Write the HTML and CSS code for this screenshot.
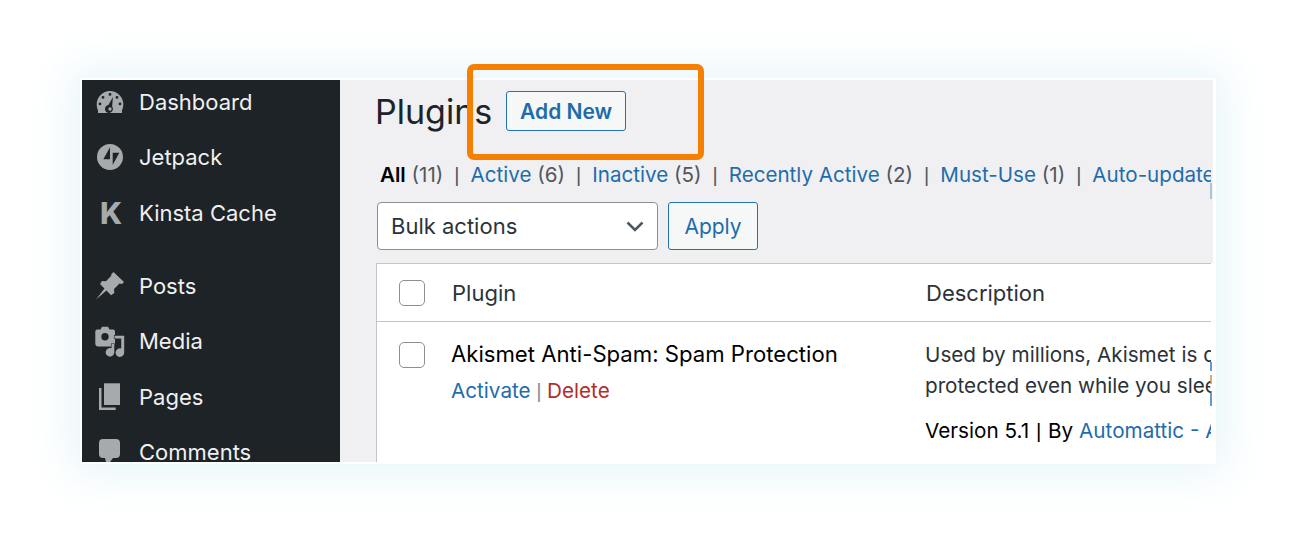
FILE: index.html
```html
<!DOCTYPE html>
<html lang="en">
<head>
    <meta charset="UTF-8">
    <title>Plugins</title>
    <link rel="stylesheet" href="styles.css">
</head>
<body>
    <div class="frame">
        <!-- Sidebar -->
        <div class="sidebar">
            <ul class="menu">
                <li>
                    <svg class="icon" viewBox="0 0 32 32"><path fill-rule="evenodd" d="M15 5a13.300 13.300 0 0 1 13.300 13.300c0 2.200-.4 4.200-1.300 6V27H3v-2.700C2.100 22.500 1.700 20.500 1.700 18.300A13.300 13.300 0 0 1 15 5zM15 7a1.400 1.400 0 1 0 0 2.800 1.400 1.400 0 0 0 0-2.800zM8 10a1.400 1.400 0 1 0 0 2.800A1.400 1.400 0 0 0 8 10zM22 10a1.400 1.400 0 1 0 0 2.800 1.400 1.400 0 0 0 0-2.800zM5 16.500a1.400 1.400 0 1 0 0 2.800 1.400 1.400 0 0 0 0-2.800zM25 16.500a1.400 1.400 0 1 0 0 2.800 1.400 1.400 0 0 0 0-2.800zM18 11l-4.600 8a4 4 0 1 0 3.700 1.500z"/><circle cx="15" cy="23" r="1.700"/></svg>
                    Dashboard
                </li>
                <li>
                    <svg class="icon" viewBox="0 0 32 32"><path fill-rule="evenodd" d="M15 3a13 13 0 1 1 0 26 13 13 0 0 1 0-26zM15 6.300L8.300 18.300H15zM17.700 11.700V24l6.600-12.300z"/></svg>
                    Jetpack
                </li>
                <li class="menu-end">
                    <span class="icon icon-k">K</span>
                    Kinsta Cache
                </li>
                <li>
                    <svg class="icon" viewBox="0 0 32 32"><path d="M18.500 2L29 12l-2 2-2.500-.5L19 19l.3 4-3.300 2.200-4.500-4.700L1 29.500l8.500-11L5 14l2-3 4 .2L16 6l.5-2z"/></svg>
                    Posts
                </li>
                <li>
                    <svg class="icon" viewBox="0 0 32 32"><path fill-rule="evenodd" d="M7 1.700h6l1.500 2.800H18a2 2 0 0 1 2 2v12a3 3 0 0 1-3 3H3.300a3 3 0 0 1-3-3v-12a2 2 0 0 1 2-2h3.200zM10 8a3.700 3.700 0 1 0 0 7.400A3.700 3.700 0 0 0 10 8z"/><path class="note-cut" d="M19.500 10.700h9.700v16.800a4.300 4.300 0 1 1-3-4V13.500h-6.700z"/><path class="note-cut" d="M16.500 19h2.800v8.300a4.300 4.300 0 1 1-2.800-4z"/></svg>
                    Media
                </li>
                <li>
                    <svg class="icon" viewBox="0 0 32 32"><path d="M9 2.300h16V24H9z"/><path d="M4 7h2.500v19.500h14.200V29H4z"/></svg>
                    Pages
                </li>
                <li>
                    <svg class="icon" viewBox="0 0 32 32"><path d="M8 3h13a4 4 0 0 1 4 4v11a4 4 0 0 1-4 4h-3l-6 8-2-8H8a4 4 0 0 1-4-4V7a4 4 0 0 1 4-4z"/></svg>
                    Comments
                </li>
            </ul>
        </div>

        <!-- Content -->
        <div class="content">
            <div class="title-row">
                <h1>Plugins</h1>
                <a class="btn btn-add">Add New</a>
            </div>
            <div class="filters">
                <b>All</b> <span class="count">(11)</span><span class="sep">|</span><a>Active</a> <span class="count">(6)</span><span class="sep">|</span><a>Inactive</a> <span class="count">(5)</span><span class="sep">|</span><a>Recently Active</a> <span class="count">(2)</span><span class="sep">|</span><a>Must-Use</a> <span class="count">(1)</span><span class="sep">|</span><a>Auto-updates Disabled</a>
            </div>
            <div class="actions">
                <div class="select">
                    Bulk actions
                    <svg class="chevron" viewBox="0 0 18 11"><path d="M1.500 1.500L9 9l7.500-7.500"/></svg>
                </div>
                <a class="btn btn-apply">Apply</a>
            </div>
            <div class="table">
                <div class="row row-head">
                    <div class="cell-check"><span class="checkbox"></span></div>
                    <div class="cell-plugin">Plugin</div>
                    <div class="cell-desc">Description</div>
                </div>
                <div class="row row-body">
                    <div class="cell-check"><span class="checkbox"></span></div>
                    <div class="cell-plugin">
                        <div class="plugin-name">Akismet Anti-Spam: Spam Protection</div>
                        <div class="plugin-links"><a>Activate</a><span class="sep-small">|</span><a class="delete">Delete</a></div>
                    </div>
                    <div class="cell-desc">
                        <p>Used by millions, Akismet is quite possibly the best way</p>
                        <p>protected even while you sleep. To get started, activate</p>
                        <p class="version">Version 5.1 <span class="sep-version">|</span> By <a>Automattic - Anti-spam Team</a></p>
                    </div>
                </div>
            </div>
        </div>

        <!-- Bits of the neighbouring column that show at the cut edge -->
        <div class="edge-mark edge-top"></div>
        <div class="edge-mark edge-bottom"></div>

        <!-- Highlight -->
        <div class="highlight"></div>
    </div>
</body>
</html>
```

FILE: styles.css
```css
* {
    margin: 0;
    padding: 0;
    box-sizing: border-box;
}

body {
    font-family: Inter, 'Liberation Sans', sans-serif;
    background-color: #fff;
    padding: 78px 0 0 80px;
    height: 559px;
    overflow: hidden;
}

a {
    color: #1f6cab;
    text-decoration: none;
}

.frame {
    width: 1136px;
    height: 386px;
    display: flex;
    position: relative;
    background-color: #fff;
    padding: 2px 3px 2px 2px;
    box-shadow: 0 0 40px 8px rgba(140, 210, 230, 0.22);
}

.sidebar {
    width: 258px;
    background-color: #1d2327;
    overflow: hidden;
    flex-shrink: 0;
}

.menu {
    list-style: none;
    margin-top: -5.6px;
}

.menu li {
    height: 55.4px;
    display: flex;
    align-items: center;
    gap: 12px;
    padding-left: 13px;
    color: #f0f0f1;
    font-size: 22px;
}

.menu .menu-end {
    margin-bottom: 17.6px;
}

.icon {
    width: 32px;
    height: 32px;
    fill: #a7aaad;
    flex-shrink: 0;
}

.note-cut {
    stroke: #1d2327;
    stroke-width: 1.2;
    paint-order: stroke;
}

.icon-k {
    color: #a7aaad;
    font-size: 30px;
    font-weight: 800;
    line-height: 32px;
    text-align: center;
}

.content {
    flex: 1;
    min-width: 0;
    overflow: hidden;
    background-color: #f0f0f2;
    padding: 11px 0 0 36px;
}

.title-row {
    display: flex;
    align-items: center;
    gap: 14px;
    height: 40px;
}

h1 {
    font-size: 34px;
    font-weight: 400;
    color: #1d2327;
    margin-left: -1px;
}

.btn {
    display: flex;
    align-items: center;
    justify-content: center;
    border: 1px solid #2271b1;
    border-radius: 3px;
    background-color: #f6f7f7;
    font-size: 21px;
}

.btn-add {
    width: 120px;
    height: 40px;
    font-weight: 600;
}

.filters {
    width: 835px;
    overflow: hidden;
    margin-top: 31px;
    padding-left: 4px;
    height: 26px;
    line-height: 26px;
    font-size: 20.6px;
    white-space: nowrap;
    color: #1d2327;
}

.filters b {
    font-weight: 600;
    color: #000;
}

.count {
    color: #50575e;
}

.sep {
    margin: 0 11px;
    font-family: 'Liberation Sans', sans-serif;
    font-size: 20px;
    color: #50575e;
}

.actions {
    display: flex;
    gap: 10px;
    margin-top: 14px;
    padding-left: 1px;
}

.select {
    width: 281px;
    height: 48px;
    display: flex;
    align-items: center;
    justify-content: space-between;
    padding: 0 13px;
    border: 1px solid #8c8f94;
    border-radius: 4px;
    background-color: #fff;
    color: #2c3338;
    font-size: 22px;
}

.chevron {
    width: 18px;
    height: 11px;
    fill: none;
    stroke: #50575e;
    stroke-width: 2.5;
}

.btn-apply {
    width: 90px;
    height: 48px;
}

.table {
    width: 835px;
    margin-top: 13px;
    background-color: #fff;
    border: 1px solid #c3c4c7;
    border-right: none;
    height: 220px;
    box-shadow: 3px 0 0 #fff;
    overflow: hidden;
}

.row {
    display: flex;
}

.row-head {
    height: 58px;
    align-items: center;
    border-bottom: 1px solid #c3c4c7;
    font-size: 22px;
    color: #2c3338;
}

.cell-check {
    width: 75px;
    padding-left: 22px;
    flex-shrink: 0;
}

.checkbox {
    display: block;
    width: 26px;
    height: 26px;
    border: 1px solid #8c8f94;
    border-radius: 5px;
    background-color: #fff;
}

.cell-plugin {
    width: 474px;
    flex-shrink: 0;
}

.cell-desc {
    white-space: nowrap;
    overflow: hidden;
    min-width: 0;
}

.row-body {
    padding-top: 20px;
}

.row-body .cell-check {
    width: 74px;
}

.plugin-name {
    font-size: 22.15px;
    color: #000;
    margin-top: -1px;
}

.plugin-links {
    margin-top: 11px;
    font-size: 20.7px;
}

.sep-small {
    margin: 0 5.5px;
    font-family: 'Liberation Sans', sans-serif;
    color: #8c8f94;
}

.delete {
    color: #b32d2e;
}

.row-body .cell-desc {
    font-size: 20.7px;
    line-height: 31px;
    color: #2c3338;
    margin-top: -3px;
}

.version {
    margin-top: 14px;
    color: #000;
}

.sep-version {
    margin: 0 1px;
    font-family: 'Liberation Sans', sans-serif;
}

.edge-mark {
    position: absolute;
    left: 1130px;
    width: 2px;
}

.edge-top {
    top: 105px;
    height: 16px;
    background-color: #a9c6dd;
}

.edge-bottom {
    top: 284px;
    height: 44px;
    opacity: 0.7;
    background: linear-gradient(#2271b1 0 20%, #fff 20% 30%, #c98a3c 30% 50%, #fff 50% 65%, #2271b1 65% 100%);
}

.highlight {
    position: absolute;
    left: 387px;
    top: -14px;
    width: 237px;
    height: 96px;
    border: 6px solid #f77f00;
    border-radius: 7px;
}
```
